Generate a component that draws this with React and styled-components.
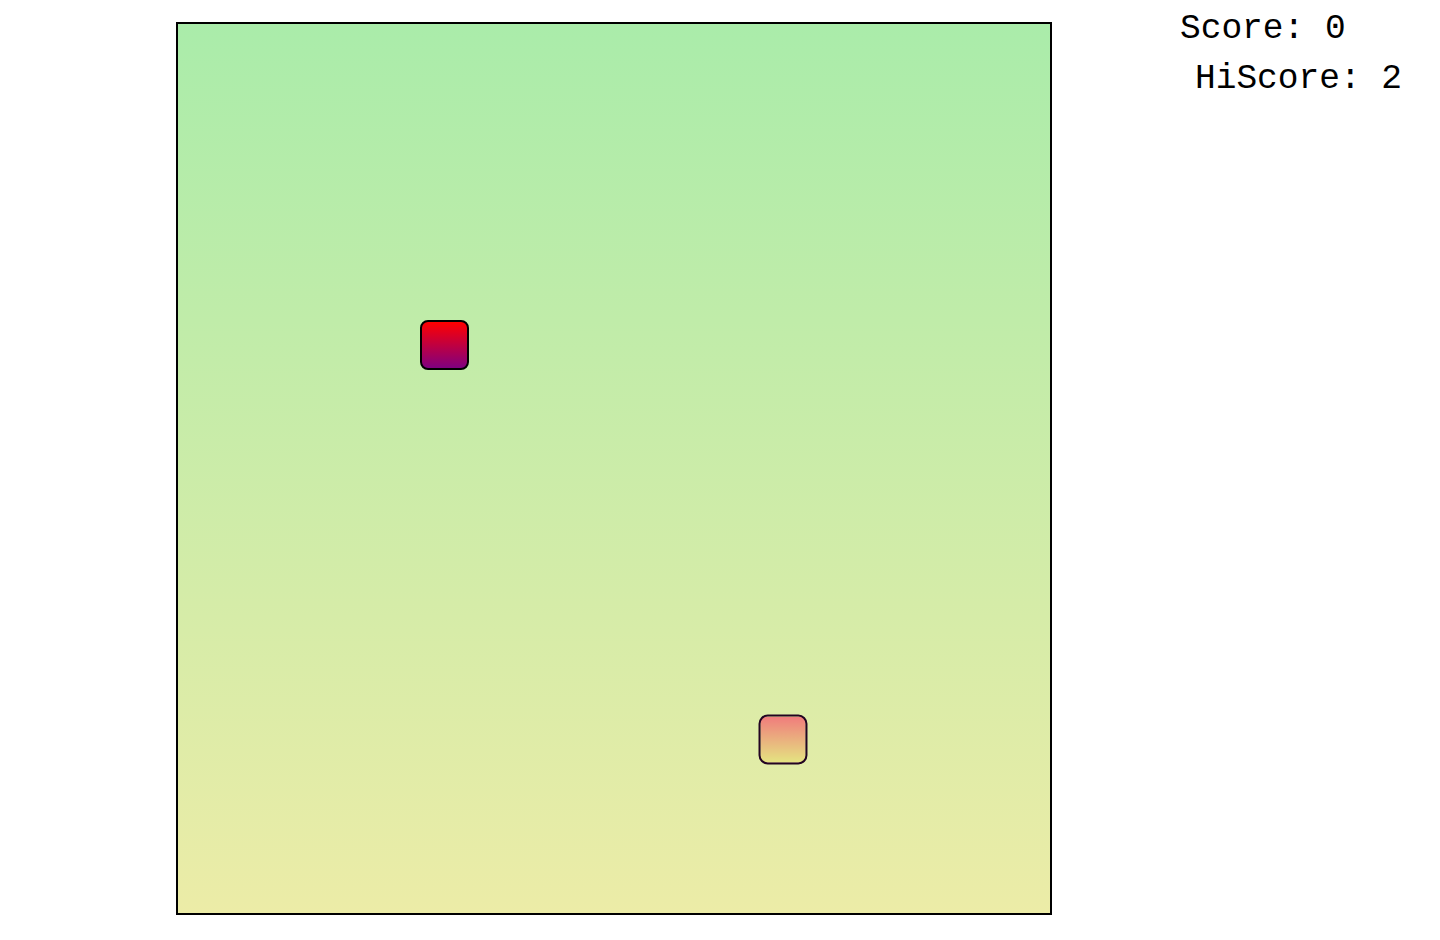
import styled, { createGlobalStyle } from "styled-components";

const GlobalStyle = createGlobalStyle`
  html, body {
    margin: 0;
    padding: 0;
    background: #fff;
  }
`;

const Page = styled.div`
  display: flex;
  align-items: flex-start;
  width: 1440px;
  height: 940px;
  box-sizing: border-box;
  padding: 22px 0 0 176px;
`;

const Board = styled.div`
  box-sizing: border-box;
  width: 876px;
  height: 893px;
  border: 2px solid black;
  background: linear-gradient(rgb(170, 236, 170), rgb(236, 236, 167));
  display: grid;
  grid-template-rows: repeat(18, 1fr);
  grid-template-columns: repeat(18, 1fr);
`;

const Head = styled.div`
  background: linear-gradient(rgb(240, 124, 124), rgb(228, 228, 129));
  border: 2px solid rgb(34, 4, 34);
  transform: scale(1.02);
  border-radius: 9px;
`;

const Food = styled.div`
  background: linear-gradient(red, purple);
  border: 2px solid black;
  border-radius: 8px;
`;

const ScorePanel = styled.div`
  display: flex;
  flex-direction: column;
  margin: -22px 0 0 128px;
  padding-top: 4px;
`;

const ScoreLine = styled.div`
  font-family: "Liberation Mono", "Courier New", monospace;
  font-size: 34.5px;
  font-weight: normal;
  line-height: 50px;
  color: #000;
  white-space: pre;
  padding-left: ${(p) => p.indent || 0}px;
`;

export default function App() {
  const food = { x: 6, y: 7 };
  const head = { x: 13, y: 15 };
  return (
    <>
      <GlobalStyle />
      <Page>
        <Board>
          <Food style={{ gridColumnStart: food.x, gridRowStart: food.y }} />
          <Head style={{ gridColumnStart: head.x, gridRowStart: head.y }} />
        </Board>
        <ScorePanel>
          <ScoreLine>Score: 0</ScoreLine>
          <ScoreLine indent={15}>HiScore: 2</ScoreLine>
        </ScorePanel>
      </Page>
    </>
  );
}
